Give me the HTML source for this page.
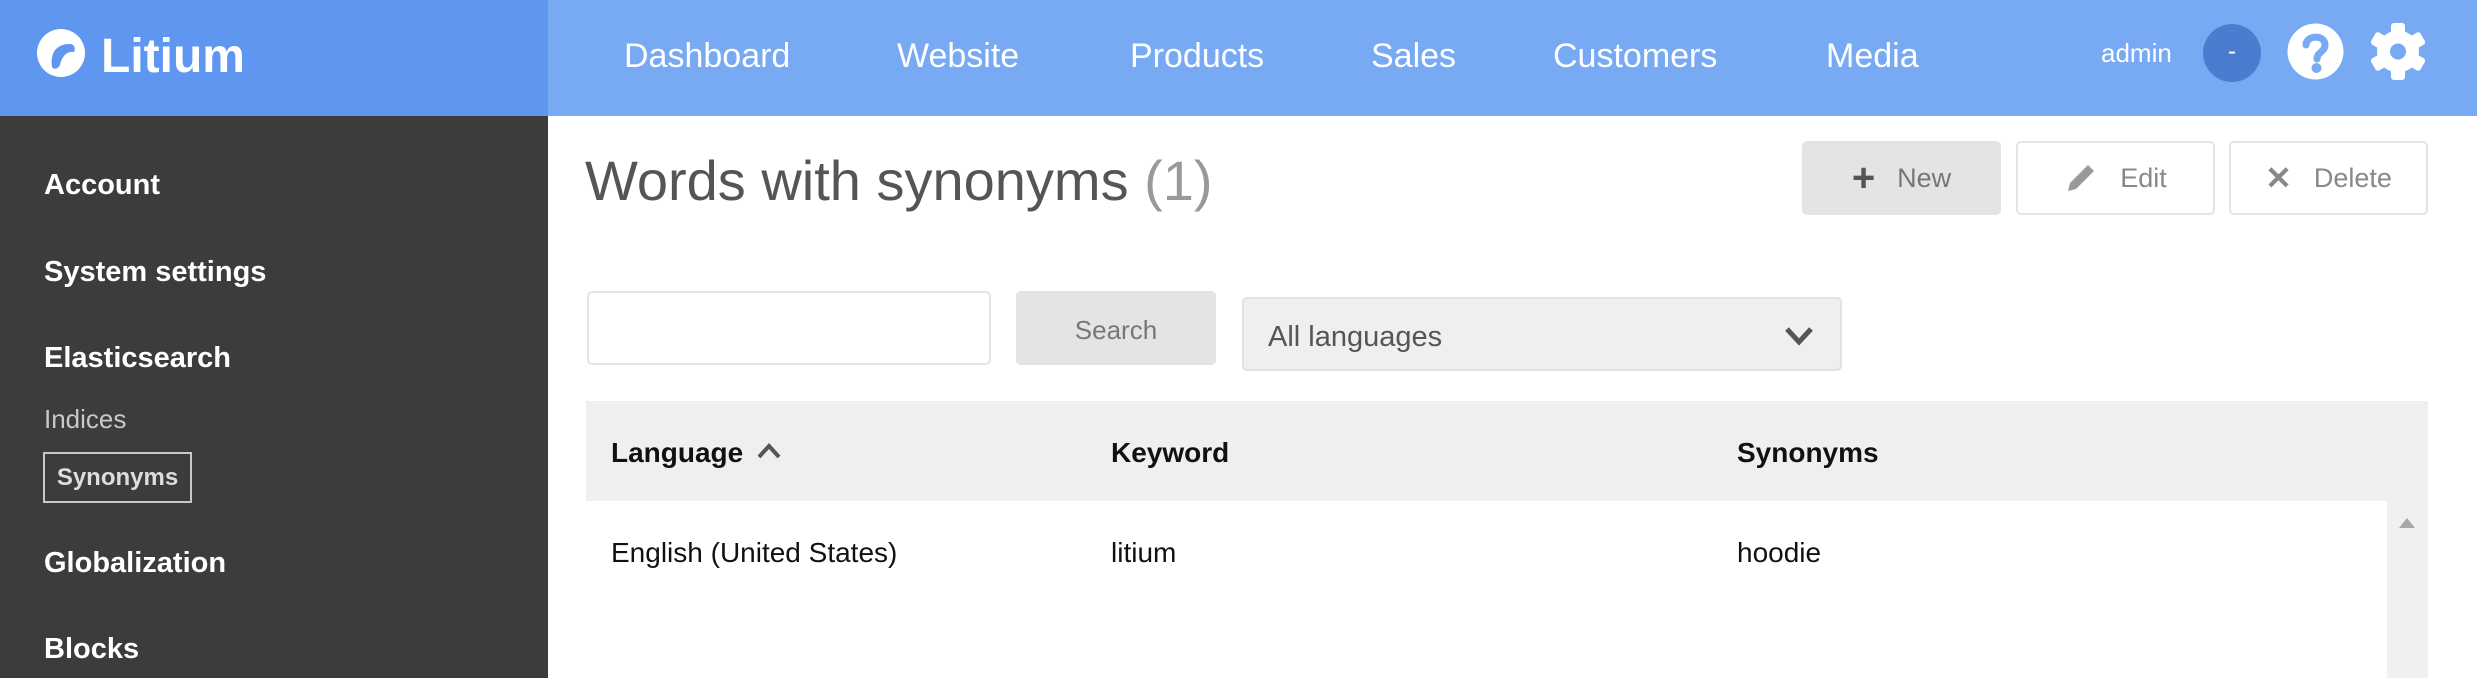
<!DOCTYPE html>
<html><head><meta charset="utf-8"><style>
*{margin:0;padding:0;box-sizing:border-box}
body{width:2477px;height:678px;overflow:hidden;background:#fff;font-family:"Liberation Sans",sans-serif;position:relative}
.a{position:absolute;white-space:nowrap}
.logo{left:0;top:0;width:548px;height:116px;background:#5e96f0}
.nav{left:548px;top:0;width:1929px;height:116px;background:#78a9f3}
.side{left:0;top:116px;width:548px;height:562px;background:#3c3c3c}
.ni{color:#fff;font-size:34px;top:37px}
.si{color:#fff;font-size:29px;font-weight:bold;left:44px}
.btn{border:2px solid #e4e4e4;border-radius:5px;color:#888;font-size:27px;top:141px;height:74px;width:199px;display:flex;align-items:center;justify-content:center;gap:22px}
.th{font-size:28px;font-weight:bold;color:#111;top:437px}
.td{font-size:28px;color:#111;top:537px}
</style></head><body>
<div class="a logo"></div>
<div class="a nav"></div>
<div class="a side"></div>
<svg class="a" style="left:36px;top:27px" width="50" height="52" viewBox="0 0 50 52"><circle cx="25" cy="26" r="24" fill="#fff"/><path d="M16 40 C14 26 20 17 34 17 C38 17 40 21 38 25 C30 24 26 30 24 38 C22 42 18 43 16 40Z" fill="#5e96f0"/></svg>
<div class="a" style="left:101px;top:29px;color:#fff;font-size:48px;font-weight:bold">Litium</div>
<div class="a ni" style="left:624px">Dashboard</div>
<div class="a ni" style="left:897px">Website</div>
<div class="a ni" style="left:1130px">Products</div>
<div class="a ni" style="left:1371px">Sales</div>
<div class="a ni" style="left:1553px">Customers</div>
<div class="a ni" style="left:1826px">Media</div>
<div class="a" style="left:2101px;top:38px;color:#fff;font-size:26px">admin</div>
<div class="a" style="left:2203px;top:24px;width:58px;height:58px;border-radius:50%;background:#4a7dd0;color:#fff;font-size:24px;text-align:center;line-height:56px">-</div>
<svg class="a" style="left:2287px;top:23px" width="57" height="57" viewBox="0 0 57 57"><circle cx="28.5" cy="28.5" r="28" fill="#fff"/><path d="M19 22 C19 12 38 11 38 22 C38 29 30 29 30 36" stroke="#78a9f3" stroke-width="7" fill="none" stroke-linecap="round"/><circle cx="29.5" cy="45" r="5" fill="#78a9f3"/></svg>
<svg class="a" style="left:2370px;top:23px" width="56" height="57" viewBox="0 0 56 57"><g fill="#fff"><circle cx="28" cy="28.5" r="21"/><rect x="21" y="0" width="14" height="57" rx="3"/><rect x="21" y="0" width="14" height="57" rx="3" transform="rotate(60 28 28.5)"/><rect x="21" y="0" width="14" height="57" rx="3" transform="rotate(-60 28 28.5)"/></g><circle cx="28" cy="28.5" r="8" fill="#78a9f3"/></svg>
<div class="a si" style="top:169px">Account</div>
<div class="a si" style="top:256px">System settings</div>
<div class="a si" style="top:342px">Elasticsearch</div>
<div class="a" style="left:44px;top:404px;color:#c8c8c8;font-size:26px">Indices</div>
<div class="a" style="left:43px;top:452px;width:149px;height:51px;border:2px solid #c8c8c8;color:#ddd;font-size:24px;font-weight:bold;text-align:center;line-height:47px">Synonyms</div>
<div class="a si" style="top:547px">Globalization</div>
<div class="a si" style="top:633px">Blocks</div>
<div class="a" style="left:585px;top:148px;color:#555;font-size:56px">Words with synonyms <span style="color:#999">(1)</span></div>
<div class="a btn" style="left:1802px;background:#e4e4e4;border-color:#e4e4e4"><span style="color:#555;font-size:40px;font-weight:bold">+</span><span style="color:#777">New</span></div>
<div class="a btn" style="left:2016px"><svg width="34" height="34" viewBox="0 0 34 34"><path d="M4 30 L6 22 L24 4 L30 10 L12 28 Z" fill="#999"/></svg><span>Edit</span></div>
<div class="a btn" style="left:2229px"><span style="color:#888;font-size:32px;font-weight:bold">✕</span><span>Delete</span></div>
<div class="a" style="left:587px;top:291px;width:404px;height:74px;border:2px solid #e4e4e4;border-radius:5px"></div>
<div class="a" style="left:1016px;top:291px;width:200px;height:74px;background:#e4e4e4;border-radius:5px;color:#777;font-size:26px;text-align:center;line-height:78px">Search</div>
<div class="a" style="left:1242px;top:297px;width:600px;height:74px;background:#efefef;border:2px solid #e2e2e2;border-radius:5px"></div>
<div class="a" style="left:1268px;top:321px;color:#555;font-size:29px">All languages</div>
<svg class="a" style="left:1784px;top:326px" width="30" height="20" viewBox="0 0 30 20"><path d="M3 3 L15 16 L27 3" stroke="#555" stroke-width="5" fill="none"/></svg>
<div class="a" style="left:586px;top:401px;width:1842px;height:100px;background:#efefef"></div>
<div class="a th" style="left:611px">Language</div>
<svg class="a" style="left:756px;top:441px" width="26" height="20" viewBox="0 0 26 20"><path d="M3 16 L13 5 L23 16" stroke="#555" stroke-width="4" fill="none"/></svg>
<div class="a th" style="left:1111px">Keyword</div>
<div class="a th" style="left:1737px">Synonyms</div>
<div class="a" style="left:2387px;top:501px;width:41px;height:177px;background:#f0f0f0"></div>
<svg class="a" style="left:2397px;top:516px" width="20" height="14" viewBox="0 0 20 14"><path d="M2 12 L10 2 L18 12Z" fill="#a8a8a8"/></svg>
<div class="a td" style="left:611px">English (United States)</div>
<div class="a td" style="left:1111px">litium</div>
<div class="a td" style="left:1737px">hoodie</div>
</body></html>
